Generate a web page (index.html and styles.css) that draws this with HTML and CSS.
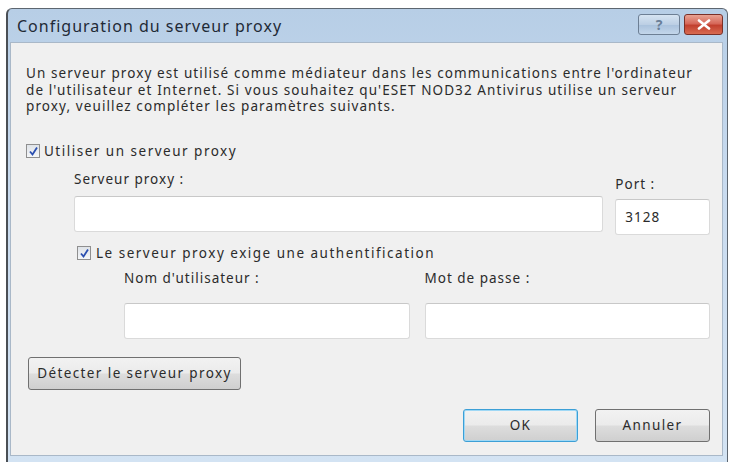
FILE: index.html
```html
<!DOCTYPE html>
<html lang="fr">
<head>
    <meta charset="UTF-8">
    <title>Configuration du serveur proxy</title>
    <link rel="stylesheet" href="styles.css">
</head>
<body>
    <div class="window">
        <div class="titlebar">
            <span class="title">Configuration du serveur proxy</span>
            <div class="caption-buttons">
                <div class="cap-btn help">?</div>
                <div class="cap-btn close">
                    <svg width="14" height="11" viewBox="0 0 14 11">
                        <path d="M2 1.5 L12 9.5 M12 1.5 L2 9.5" stroke="#fff" stroke-width="2.6" stroke-linecap="round"/>
                    </svg>
                </div>
            </div>
        </div>

        <div class="content">
            <p class="intro">Un serveur proxy est utilisé comme médiateur dans les communications entre l'ordinateur<br>de l'utilisateur et Internet. Si vous souhaitez qu'ESET NOD32 Antivirus utilise un serveur<br>proxy, veuillez compléter les paramètres suivants.</p>

            <label class="check-row">
                <span class="checkbox">
                    <svg width="11" height="11" viewBox="0 0 11 11"><path d="M2 5.5 L4.5 8.5 L9 1.5" stroke="#2a4fb0" stroke-width="1.8" fill="none"/></svg>
                </span>
                Utiliser un serveur proxy
            </label>

            <div class="server-row">
                <div class="field server">
                    <span class="field-label">Serveur proxy :</span>
                    <div class="textbox"></div>
                </div>
                <div class="field port">
                    <span class="field-label">Port :</span>
                    <div class="textbox">3128</div>
                </div>
            </div>

            <label class="check-row auth">
                <span class="checkbox">
                    <svg width="11" height="11" viewBox="0 0 11 11"><path d="M2 5.5 L4.5 8.5 L9 1.5" stroke="#2a4fb0" stroke-width="1.8" fill="none"/></svg>
                </span>
                Le serveur proxy exige une authentification
            </label>

            <div class="auth-row">
                <div class="field">
                    <span class="field-label">Nom d'utilisateur :</span>
                    <div class="textbox"></div>
                </div>
                <div class="field">
                    <span class="field-label">Mot de passe :</span>
                    <div class="textbox"></div>
                </div>
            </div>

            <button class="btn detect">Détecter le serveur proxy</button>

            <div class="footer">
                <button class="btn default">OK</button>
                <button class="btn">Annuler</button>
            </div>
        </div>
    </div>
</body>
</html>
```

FILE: styles.css
```css
* {
    margin: 0;
    padding: 0;
    box-sizing: border-box;
}

body {
    background: #ffffff;
    font-family: 'Noto Sans', 'Open Sans', sans-serif;
    color: #2b2b2b;
    overflow: hidden;
}

.window {
    margin: 8px 6px 0 6px;
    height: 454px;
    border: 1px solid #5d6670;
    border-left: 2px solid #4a4f55;
    border-bottom: none;
    border-radius: 6px 6px 0 0;
    background: linear-gradient(180deg, #b7cee6 0%, #c9dbef 40%, #d3e3f3 100%);
    padding: 0 4px 6px 2px;
    display: flex;
    flex-direction: column;
}

.titlebar {
    height: 33px;
    display: flex;
    align-items: center;
    justify-content: space-between;
    padding-left: 7px;
}

.title {
    font-size: 16px;
    color: #1f2a36;
    letter-spacing: 1px;
}

.caption-buttons {
    display: flex;
    gap: 4px;
    margin-top: -2px;
}

.cap-btn {
    height: 21px;
    border: 1px solid #6d7f94;
    border-radius: 3px;
    display: flex;
    align-items: center;
    justify-content: center;
}

.cap-btn.help {
    width: 42px;
    background: linear-gradient(180deg, #d6e4f2 0%, #bccfe4 50%, #a9c1dc 51%, #c3d6ea 100%);
    color: #6a7f98;
    font-weight: bold;
    font-size: 14px;
}

.cap-btn.close {
    width: 39px;
    border-color: #7a3028;
    background: linear-gradient(180deg, #e9a393 0%, #d6685a 45%, #c2402f 55%, #d86a50 100%);
}

.content {
    flex: 1;
    background: #f0f0f0;
    border: 1px solid #a9b8c8;
    padding: 22px 12px 0 15px;
    font-size: 13.5px;
    letter-spacing: 1px;
    display: flex;
    flex-direction: column;
}

.intro {
    line-height: 16.5px;
    letter-spacing: 1.1px;
    white-space: nowrap;
}

.check-row {
    display: flex;
    align-items: center;
    gap: 4px;
    margin-top: 28px;
    height: 17px;
    letter-spacing: 1.5px;
}

.checkbox {
    width: 14px;
    height: 14px;
    border: 1px solid #8f8f8f;
    background: linear-gradient(180deg, #dfe3e8 0%, #f4f6f8 100%);
    display: flex;
    align-items: center;
    justify-content: center;
}

.server-row {
    display: flex;
    margin-left: 48px;
    gap: 12px;
}

.field {
    display: flex;
    flex-direction: column;
}

.field.server {
    width: 531px;
    padding-top: 11px;
}

.field.port {
    width: 95px;
    padding-top: 16px;
}

.field-label {
    height: 17px;
    line-height: 17px;
}

.field.server .field-label {
    margin-bottom: 8px;
}

.field.port .field-label {
    margin-bottom: 6px;
}

.textbox {
    height: 36px;
    background: #ffffff;
    border: 1px solid #dadada;
    border-top-color: #c8c8c8;
    border-radius: 3px;
    padding: 9px 9px;
    line-height: 17px;
}

.check-row.auth {
    margin-top: 10px;
    margin-left: 51px;
    gap: 5px;
}

.auth-row {
    display: flex;
    gap: 15px;
    margin-left: 98px;
    margin-top: 8px;
}

.auth-row .field {
    width: 286px;
}

.auth-row .field-label {
    margin-bottom: 16px;
}

.btn {
    font-family: inherit;
    font-size: 13.5px;
    letter-spacing: 1.4px;
    color: #2b2b2b;
    height: 33px;
    border: 1px solid #707070;
    border-radius: 3px;
    background: linear-gradient(180deg, #f2f2f2 0%, #ebebeb 48%, #dddddd 52%, #cfcfcf 100%);
}

.btn.detect {
    width: 213px;
    margin-top: 18px;
    margin-left: 2px;
    align-self: flex-start;
}

.footer {
    display: flex;
    justify-content: flex-end;
    gap: 17px;
    margin-top: 19px;
}

.footer .btn {
    width: 115px;
}

.btn.default {
    border-color: #3c9fd6;
    box-shadow: inset 0 0 0 1px #9fd8f5;
}
```
